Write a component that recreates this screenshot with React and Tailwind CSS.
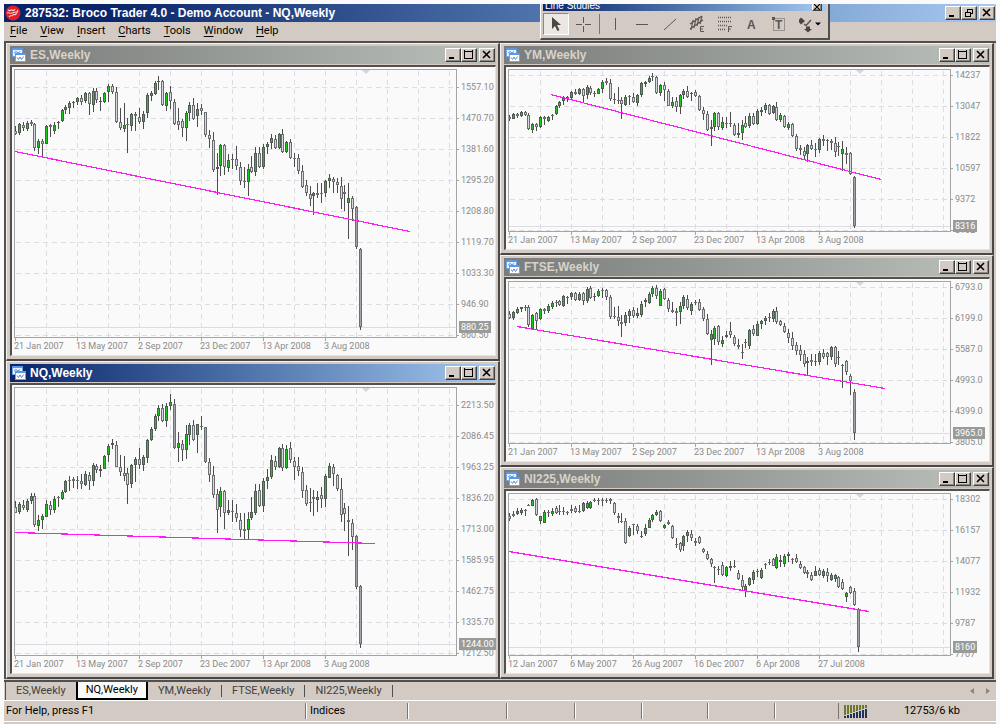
import React from "react";

// Candle series: "high top bottom low" in thirds of a pixel, "g" marks a rising week.
const ES = `168 182 192 195|158 163 190 195g|157 165 174 182|154 158 176 184g|151 157 163 167|158 163 235 242|206 213 233 253g|207 213 221 258|165 169 221 223g|163 166 171 200|156 165 184 192g|153 155 160 176g|118 121 153 155g|106 111 121 131g|94 99 113 131g|92 96 100 115g|82 85 97 105g|75 84 96 104|66 69 93 98g|66 69 103 134|55 62 104 127g|55 64 91 98|81 94 96 123g|66 68 96 98g|43 49 66 97g|43 47 66 72|52 67 156 160|115 157 175 181|100 165 178 187g|143 163 166 248|129 131 169 184g|127 132 139 184|113 140 157 162|122 131 156 178g|68 75 130 143g|64 70 78 94g|34 38 71 76g|19 32 37 60g|30 32 106 109|65 68 107 122g|49 67 94 118|86 96 162 166|115 154 164 180|148 154 174 200|123 128 174 212g|97 104 128 154g|84 105 148 150|100 116 137 170g|101 115 124 134|125 127 195 200|181 195 207 235|186 209 299 306|250 290 298 375g|222 224 288 318g|222 224 292 314|252 270 293 305g|252 267 269 296|229 268 287 299|277 292 334 346|290 332 336 355|282 298 336 378g|258 290 305 310|232 250 305 317g|232 250 290 295|222 232 291 298g|217 222 232 252g|192 203 220 238g|194 206 233 238|188 193 233 236g|176 192 246 249|212 217 247 250g|208 217 264 266|250 264 266 292|252 265 304 311|286 304 350 355|330 346 370 378|348 372 388 408|366 370 377 434g|338 370 374 384|338 370 372 398|330 334 368 382g|311 325 334 355g|320 326 336 370|323 336 346 368|322 347 388 416|345 366 373 422|338 383 400 508g|378 385 418 452|408 411 532 538|534 536 772 780`;
const NQ = `422 440 458 460|427 433 455 461g|420 436 444 450|416 424 449 455g|398 408 422 432g|399 408 496 502|466 480 497 513g|461 469 481 506g|419 431 470 472g|424 434 449 464|409 418 449 459g|409 411 414 440|390 396 416 420g|360 362 397 400g|348 361 363 392|350 358 362 384|347 359 363 388|343 364 373 388|334 343 374 377g|336 344 362 389|310 314 362 377g|312 319 331 338|314 326 332 352g|285 287 326 328g|253 257 286 307g|236 250 256 268g|243 255 320 322|285 320 337 349|288 340 347 363|324 340 376 432|313 315 371 383g|290 298 315 365g|264 298 314 328|285 291 315 332g|236 241 293 308g|201 207 241 243g|163 168 207 214g|134 143 167 184g|132 145 184 186|128 138 184 200g|102 127 137 150g|117 131 263 266|216 250 263 307g|240 252 270 303|196 222 269 298g|188 196 226 255g|181 195 240 242|192 193 226 278g|169 197 202 210|200 202 305 308|293 305 346 365|318 345 406 414|387 401 449 519|380 394 442 472g|391 393 458 506|419 450 460 466g|421 453 455 485|431 460 475 487|459 480 510 531|460 508 512 538|455 478 510 540g|410 457 473 480g|373 392 458 466g|373 390 438 442|354 364 437 455g|328 350 364 388g|286 300 350 356g|288 302 320 331|262 265 321 323g|252 265 324 333|256 267 324 328g|247 265 300 310|290 302 320 360|292 318 334 348|322 335 394 414|374 391 431 437|385 426 428 455|390 412 418 467|392 410 420 455g|380 404 416 443|343 349 417 440g|309 317 353 354g|311 320 343 378|342 344 387 392|354 388 466 487|430 445 461 514|438 480 486 587|478 490 532 570|524 528 680 686|676 678 852 864`;
const YM = `164 172 177 182|160 163 176 178g|159 162 167 173|153 155 167 171g|152 155 164 168|160 166 208 210|188 193 210 219g|188 193 202 214|169 171 200 203g|169 172 176 196|167 171 182 186g|162 164 167 179|135 138 163 165g|123 126 138 145g|109 113 123 136g|107 112 116 126g|92 95 115 118g|87 95 103 106|84 88 102 106g|84 88 108 125|75 82 106 118g|78 84 100 105|92 100 102 112|84 86 101 103g|60 65 87 98g|55 64 68 74|58 68 118 122|98 118 121 131|82 121 124 131|112 120 132 177|105 110 134 138g|105 109 112 136|99 112 126 130|103 106 129 138g|66 70 106 112g|62 66 72 82g|47 53 65 68g|40 48 51 64|47 50 99 101|73 75 100 109g|66 74 91 122|86 92 137 139|112 126 137 143g|110 124 140 155|102 105 141 162g|88 92 105 116g|79 92 110 114|95 98 102 123g|91 96 108 111|106 108 149 152|140 150 163 180|152 163 209 214|180 200 208 258g|157 158 200 213g|157 160 202 210|172 187 203 211g|172 188 190 204|157 188 192 200|188 194 226 229|190 220 226 235g|181 194 220 240g|169 189 200 204|158 169 198 204g|160 169 192 195|148 152 193 196g|142 149 156 168g|129 135 150 158g|132 136 162 164|136 138 160 163g|127 140 181 184|160 166 180 186g|166 169 202 204|187 192 204 210g|190 193 229 231|222 227 266 272|256 265 271 284|260 274 288 299|252 254 281 307g|240 254 268 270|250 267 269 290|234 238 270 280g|226 238 242 258|238 240 244 272|236 244 250 270|232 249 277 290|246 257 260 288|244 266 283 332g|260 280 284 313|276 279 341 344|349 350 497 504`;
const FTSE = `182 193 205 208|182 186 204 209g|172 177 189 192g|170 172 178 187g|164 170 175 184|165 171 224 232|193 196 236 239g|186 190 212 240|174 177 207 210g|174 178 182 193|163 168 184 188g|153 159 170 176g|150 157 159 172|149 154 166 168|136 139 168 171g|138 140 143 163|126 130 141 151g|127 130 149 152|126 131 149 153g|126 130 154 164|111 116 152 158g|109 113 145 147|130 138 142 153g|118 123 138 140g|113 119 121 145|116 120 142 150|134 140 200 206|172 198 201 206|168 202 212 228|195 215 221 260|187 196 218 228g|176 182 197 220g|170 180 198 204|175 190 198 204g|154 162 196 200g|145 150 157 170g|127 131 160 163g|108 115 132 140g|105 115 137 146|118 122 167 168g|113 118 148 151|145 150 178 186|156 179 186 190|175 182 190 228|156 168 187 222g|135 142 169 178g|136 147 174 180|156 161 184 196g|150 156 160 164|146 156 180 182|172 178 208 213|192 206 251 256|240 253 270 345g|229 233 268 285g|225 229 275 286|258 270 282 290g|244 256 262 265g|216 243 254 263|256 260 283 288|266 286 292 296|283 305 310 326|268 276 280 294|238 240 287 297g|226 236 252 257|214 221 257 259g|210 214 222 236g|198 204 213 224g|188 200 204 216|178 183 208 216g|171 183 217 222|210 214 226 229|220 228 246 248|238 248 263 280|246 263 289 300|277 284 303 315|285 301 314 334|301 312 342 350|321 332 338 375g|311 331 336 349|313 332 336 349|304 308 336 345g|298 310 320 328|306 310 320 344|288 291 320 330g|288 291 343 351|304 320 324 344|342 344 346 413|331 332 367 376|372 377 392 434|418 427 549 570`;
const NI = `144 152 163 168|139 147 152 157|130 137 148 150g|130 134 143 150g|133 136 139 152|118 120 122 124|102 105 122 124g|98 102 150 153|152 154 167 178g|135 140 173 175g|134 140 144 157|129 138 146 154g|124 130 143 146|121 138 142 150|127 139 141 149|138 140 142 150|121 132 139 145|123 128 142 145|121 137 142 144|110 114 139 142g|108 115 128 132g|109 112 130 133g|100 105 107 112|100 105 107 120|98 105 107 122|99 105 107 114|98 103 108 118|112 115 145 150|145 152 158 174|144 168 172 175|158 168 234 236|184 190 212 216g|176 178 181 209|176 182 198 208|198 212 215 219|178 190 206 212g|158 164 188 190g|147 150 164 172g|135 142 150 152g|135 138 167 172|176 180 188 193g|164 172 176 180|181 182 220 222|220 236 239 248|230 234 256 262|210 214 244 258g|195 202 214 230g|196 207 219 228|220 228 234 244|213 217 235 237|249 252 262 264|258 266 282 286|280 283 298 305|303 305 308 355|302 312 314 330|291 300 330 333|303 306 334 337g|288 302 310 318g|284 304 307 310|315 325 341 346|330 346 367 374|358 362 376 395g|336 339 360 362g|316 320 346 357g|311 318 322 337|310 314 338 342g|294 297 300 312|282 290 294 300|278 282 302 304|268 276 308 312g|269 284 290 305g|268 274 298 305g|262 267 272 290g|278 282 286 296|266 280 291 293|288 297 310 313|302 305 325 326|314 321 326 338|320 330 344 348|304 317 332 334g|309 315 329 334|311 319 334 338g|309 320 334 350|325 331 346 349g|327 330 341 350g|333 336 367 370|343 352 372 376|381 385 396 410g|364 366 383 386|370 377 421 424|429 431 546 560`;

const DATES = ["21 Jan 2007", "13 May 2007", "2 Sep 2007", "23 Dec 2007", "13 Apr 2008", "3 Aug 2008"];

const CHARTS = {
  ES: {
    title: "ES,Weekly", data: ES, base: 0, tall: true, line: [0, 81, 395, 161], last: 257, tag: "880.25", dates: DATES,
    prices: ["1557.10", "1470.70", "1381.60", "1295.20", "1208.80", "1119.70", "1033.30", "946.90", "860.50"],
  },
  NQ: {
    title: "NQ,Weekly", data: NQ, base: 28, tall: true, active: true, line: [0, 144, 360, 155], last: 256, tag: "1244.00", dates: DATES,
    prices: ["2213.50", "2086.45", "1963.25", "1836.20", "1713.00", "1585.95", "1462.75", "1335.70", "1212.50"],
  },
  YM: {
    title: "YM,Weekly", data: YM, base: 10, line: [42, 24, 372, 109], last: 156, tag: "8316", dates: DATES,
    prices: ["14237", "13047", "11822", "10597", "9372", "8102"],
  },
  FTSE: {
    title: "FTSE,Weekly", data: FTSE, base: 32, line: [8, 44, 376, 106], last: 151, tag: "3965.0", dates: DATES,
    prices: ["6793.0", "6199.0", "5587.0", "4993.0", "4399.0", "3805.0"],
  },
  NI: {
    title: "NI225,Weekly", data: NI, base: 29, line: [0, 57, 360, 117], last: 153, tag: "8160",
    dates: ["12 Jan 2007", "6 May 2007", "26 Aug 2007", "16 Dec 2007", "6 Apr 2008", "27 Jul 2008"],
    prices: ["18302", "16157", "14077", "11932", "9787", "7707"],
  },
};

const WEEK = 3.875;
const CELL = 31;

function Candles({ data, base }) {
  return data.split("|").map((row, i) => {
    const up = row.endsWith("g");
    const [h, t, b, l] = row.replace("g", "").split(" ").map((v) => Math.round(v / 3) - base);
    const x = Math.round(i * WEEK);
    const bodyH = Math.max(1, b - t);
    const fill = up ? "#1fc41f" : bodyH > 34 ? "#a2a4aa" : "#d6d9e0";
    return (
      <g key={i}>
        <rect x={x} y={h} width="1" height={Math.max(1, l - h)} fill="#4c4c4c" />
        <rect x={x - 1} y={t} width="3" height={bodyH} fill={up ? "#4e5e4e" : "#6c6e72"} />
        {bodyH > 2 && <rect x={x} y={t + 1} width="1" height={bodyH - 2} fill={fill} />}
      </g>
    );
  });
}

function Plot({ chart }) {
  const first = chart.tall ? 17 : 5;
  const [x1, y1, x2, y2] = chart.line;
  const ids = Array.from({ length: 40 }, (_, i) => i);
  return (
    <svg className="block h-full w-full" role="img" aria-label={chart.title + " chart"}>
      <g stroke="#dcdce2" strokeWidth="1" shapeRendering="crispEdges">
        {ids.map((i) => (
          <line key={"v" + i} x1={CELL * (i + 1) + 0.5} x2={CELL * (i + 1) + 0.5} y1="1" y2="100%" strokeDasharray="5 4" />
        ))}
        {ids.map((i) => (
          <line key={"h" + i} x1="1" x2="100%" y1={first + CELL * i + 0.5} y2={first + CELL * i + 0.5} strokeDasharray="5 4" />
        ))}
        <line x1="0" x2="100%" y1={chart.last + 0.5} y2={chart.last + 0.5} />
      </g>
      <path d="M347 0h8l-4 4z" fill="#d6d6da" />
      <g shapeRendering="crispEdges">
        <Candles data={chart.data} base={chart.base} />
        <line x1={x1} y1={y1 + 0.5} x2={x2} y2={y2 + 0.5} stroke="#ff1cf4" strokeWidth="1.200" />
      </g>
    </svg>
  );
}

const raised =
  "bg-[#d3cbc3] border border-t-white border-l-white border-r-[#404040] border-b-[#404040] shadow-[inset_-1px_-1px_0_#8c8680]";

function WinButton({ label, children, className = "" }) {
  return (
    <button type="button" aria-label={label} className={`flex h-[14px] w-4 items-center justify-center ${raised} ${className}`}>
      <svg width="10" height="10" viewBox="0 0 10 10" fill="none" stroke="#000" shapeRendering="crispEdges">
        {children}
      </svg>
    </button>
  );
}

function WinButtons({ restore }) {
  return (
    <div className="flex shrink-0">
      <WinButton label="Minimize">
        <path d="M1 8h5" strokeWidth="2" />
      </WinButton>
      <WinButton label={restore ? "Restore" : "Maximize"}>
        {restore ? (
          <path d="M3 1h6M3.500 1v3M8.500 1v5M6 5.500h3M1 4h6M1.500 4v5M6.500 4v5M1 8.500h6" />
        ) : (
          <path d="M0 1h9M.5 0v9M8.500 0v9M0 8.500h9" />
        )}
      </WinButton>
      <WinButton label="Close" className="ml-[2px]">
        <path d="M1 1l7 7M8 1l-7 7" strokeWidth="1.600" shapeRendering="auto" />
      </WinButton>
    </div>
  );
}

function ChartIcon() {
  return (
    <svg width="14" height="14" viewBox="0 0 14 14" className="shrink-0" aria-hidden="true">
      <rect x="0.500" y="0.500" width="10" height="8" fill="#e8f1fd" stroke="#6ea4e8" />
      <path d="M0 1h11" stroke="#5b97e4" strokeWidth="2" />
      <path d="M2 5l2-1.500 2 1.500 2-1.500" stroke="#5b93dc" fill="none" />
      <rect x="3.500" y="5.500" width="10" height="8" fill="#fff" stroke="#6ea4e8" />
      <path d="M3 6h11" stroke="#5b97e4" strokeWidth="2" />
      <path d="M5 9.500l1.500 2 1.500-2.500 1.500 2.500 2-3" stroke="#4f8ad8" fill="none" />
    </svg>
  );
}

function ChartWindow({ chart }) {
  const bar = chart.active
    ? "bg-gradient-to-r from-[#0a246a] to-[#a6caf0] text-white"
    : "bg-gradient-to-r from-[#7a7d7b] to-[#bbc0bb] text-[#d8d2ca]";
  const plotHeight = chart.tall ? "h-[269px]" : "h-[163px]";
  return (
    <section className="flex flex-1 flex-col border-t border-r-2 border-b-2 border-l border-t-[#f4f2ee] border-r-[#484848] border-b-[#484848] border-l-[#f4f2ee] bg-[#d3cbc3] pt-[2px] pr-[2px] pb-[3px] pl-[3px]">
      <header className={`flex h-[18px] items-center gap-1 pr-px pl-[2px] ${bar}`}>
        <ChartIcon />
        <h2 className="flex-1 font-['Liberation_Sans',sans-serif] text-[12px] leading-[18px] font-bold whitespace-nowrap">{chart.title}</h2>
        <WinButtons />
      </header>
      <div className="mt-px flex flex-1 flex-col border-t-2 border-r border-b border-l-2 border-t-[#505050] border-r-[#e8e4de] border-b-[#e8e4de] border-l-[#505050] bg-[#fafafa] pt-[2px] pl-[2px] text-[9px] leading-[10px] text-[#8a8a8a]">
        <div className="flex">
          <div className={`min-w-0 flex-1 border border-[#a4a4a4] ${plotHeight}`}>
            <Plot chart={chart} />
          </div>
          <div className={`relative w-[38px] shrink-0 ${plotHeight}`}>
            <ul className={`flex flex-col gap-[21px] ${chart.tall ? "pt-[13px]" : "pt-px"}`}>
              {chart.prices.map((p) => (
                <li key={p} className="flex h-[10px] items-center gap-[2px]">
                  <span className="h-px w-[2px] bg-[#a4a4a4]" />
                  {p}
                </li>
              ))}
            </ul>
            <span className="absolute left-[2px] bg-[#999b99] px-[2px] py-px text-white" style={{ top: chart.last - 5 }}>
              {chart.tag}
            </span>
          </div>
        </div>
        <ul className="flex h-[17px]">
          {chart.dates.map((d) => (
            <li key={d} className="w-[62px] whitespace-nowrap">
              <span className="ml-px block h-[3px] w-px bg-[#a4a4a4]" />
              {d}
            </li>
          ))}
        </ul>
      </div>
    </section>
  );
}

function Tool({ label, pressed, wide, children }) {
  return (
    <button
      type="button"
      aria-label={label}
      className={`flex h-[22px] items-center justify-center ${wide ? "w-[30px]" : "w-[26px]"} ${
        pressed ? "border border-t-[#8c8680] border-r-white border-b-white border-l-[#8c8680] bg-[#ebe7e2]" : ""
      }`}
    >
      <svg width={wide ? 24 : 18} height="18" viewBox={wide ? "0 0 24 18" : "0 0 18 18"} fill="none" stroke="#5a5652">
        {children}
      </svg>
    </button>
  );
}

function LineStudies() {
  return (
    <aside
      aria-label="Line Studies"
      className="absolute top-0 right-[166px] w-[290px] border-r-2 border-b-2 border-l border-r-[#505050] border-b-[#505050] border-l-white bg-[#d3cbc3] px-[2px] pb-[3px]"
    >
      <div className="flex h-[7px] items-end justify-between overflow-hidden bg-gradient-to-r from-[#0a246a] to-[#a6caf0] px-[2px] text-white">
        <span className="font-['Liberation_Sans',sans-serif] text-[10px] leading-[10px]">Line Studies</span>
        <button type="button" aria-label="Close" className={`mr-[2px] flex h-[10px] w-[10px] shrink-0 items-end justify-center ${raised}`}>
          <svg width="6" height="6" viewBox="0 0 6 6" stroke="#000" strokeWidth="1.200">
            <path d="M0 0l6 6M6 0l-6 6" />
          </svg>
        </button>
      </div>
      <div className="mt-[2px] flex items-center gap-[2px]">
        <Tool label="Cursor" pressed>
          <path d="M5 2v12l3-3 2.500 5 2-1-2.500-5h4z" fill="#4a4642" stroke="none" />
        </Tool>
        <Tool label="Crosshair">
          <path d="M8.500 2v6M8.500 11v6M1 9.500h6M10 9.500h6" />
        </Tool>
        <span className="h-5 w-px bg-[#7c7670]" />
        <Tool label="Vertical line">
          <path d="M9.500 3v12" />
        </Tool>
        <Tool label="Horizontal line">
          <path d="M3 9.500h12" />
        </Tool>
        <Tool label="Trendline">
          <path d="M3 15L15 4" />
        </Tool>
        <Tool label="Equidistant channel">
          <path d="M1 9L13 1M1 14L14 5M4 5l-2 10M7 3l-2 10M10 2L8 11M13 1l-2 8" strokeWidth="1.200" />
          <path d="M15 11.500h-3.500v5H15M11.500 14H14" />
        </Tool>
        <Tool label="Fibonacci retracement">
          <path d="M1 2.500h13M1 6.500h13M1 10.500h9M1 14.500h8" strokeDasharray="1 1" strokeWidth="1.400" />
          <path d="M15 11.500h-3.500V17M11.500 14H14" />
        </Tool>
        <Tool label="Text">
          <text x="3" y="14" fontSize="12" fontWeight="bold" fill="#5a5652" stroke="none" className="font-['Liberation_Sans',sans-serif]">A</text>
        </Tool>
        <Tool label="Text label">
          <rect x="1.500" y="3.500" width="11" height="12" strokeDasharray="1 1" />
          <path d="M0 2h3v3H0z" fill="#5a5652" stroke="none" />
          <text x="3" y="14" fontSize="12" fontWeight="bold" fill="#5a5652" stroke="none" className="font-['Liberation_Sans',sans-serif]">T</text>
        </Tool>
        <Tool label="Arrows" wide>
          <path d="M-1 6l3-3.500L6 6l-4 3.500zM5 14h8l-4 3.500zM7 11.500h4V14H7z" fill="#4a4642" stroke="none" />
          <path d="M5 9l2 1.500L12 5" strokeWidth="1.500" />
          <path d="M16 7.500h6l-3 3z" fill="#000" stroke="none" />
        </Tool>
      </div>
    </aside>
  );
}

function Logo() {
  return (
    <svg width="16" height="16" viewBox="0 0 16 16" className="shrink-0" aria-hidden="true">
      <circle cx="8" cy="8" r="7.500" fill="#dc1f2a" />
      <path d="M3 5c2 2 3-1 4 0s2 1 3-1M2 8c2-1 3 1 5 0s3-1 6-1M4 12c2-3 3 0 4-2s2 1 3-1l2-4" fill="none" stroke="#fbd0d0" strokeWidth="1.100" />
    </svg>
  );
}

const MENU = ["File", "View", "Insert", "Charts", "Tools", "Window", "Help"];
const CELLS = ["w-[102px]", "w-[99px]", "w-[68px]", "w-[67px]", "w-[66px]", "w-[67px]", "w-[64px]"];

export default function App() {
  return (
    <div className="min-h-screen bg-[#fafafa] px-1 pt-1 font-['Roboto',sans-serif] text-[11px] text-black">
      <div className="relative flex min-h-[calc(100vh-4px)] flex-col bg-[#d3cbc3]">
        <header className="flex h-[18px] items-center gap-1 bg-gradient-to-r from-[#0a246a] from-10% to-[#a6caf0] pr-px pl-px text-white">
          <Logo />
          <h1 className="flex-1 font-['Liberation_Sans',sans-serif] text-[12px] leading-[18px] font-bold whitespace-nowrap">
            287532: Broco Trader 4.0 - Demo Account - NQ,Weekly
          </h1>
          <WinButtons restore />
        </header>
        <nav className="flex h-[19px] items-center gap-[13px] pl-[6px]">
          {MENU.map((m) => (
            <button type="button" key={m}>
              <u className="underline-offset-2">{m[0]}</u>
              {m.slice(1)}
            </button>
          ))}
        </nav>
        <LineStudies />

        <main className="grid flex-1 grid-cols-2 border-t-2 border-l-2 border-[#505050] pr-[2px]">
          <div className="flex min-w-0 flex-col">
            <ChartWindow chart={CHARTS.ES} />
            <ChartWindow chart={CHARTS.NQ} />
          </div>
          <div className="flex min-w-0 flex-col">
            <ChartWindow chart={CHARTS.YM} />
            <ChartWindow chart={CHARTS.FTSE} />
            <ChartWindow chart={CHARTS.NI} />
          </div>
        </main>

        <nav className="mt-px flex h-5 items-stretch border-t-2 border-[#505050] pl-px text-[#404040]">
          {["ES", "NQ", "YM", "FTSE", "NI"].map((k) => {
            const active = k === "NQ";
            const look = active
              ? "border-r-2 border-b-2 border-l-2 border-black bg-[#fafafa] px-[8px] text-black"
              : k === "ES"
                ? "border-l border-[#505050] px-[10px]"
                : "px-[10px]";
            return (
              <div key={k} className="flex items-stretch">
                <button type="button" className={look}>
                  {CHARTS[k].title}
                </button>
                {k !== "ES" && !active && <span className="h-3 w-px self-center bg-[#505050]" />}
              </div>
            );
          })}
          <div className="ml-auto flex items-center gap-3 pr-[6px]">
            <button type="button" aria-label="Scroll tabs left">
              <svg width="4" height="6" viewBox="0 0 4 6"><path d="M4 0v6L0 3z" fill="#8c8680" /></svg>
            </button>
            <button type="button" aria-label="Scroll tabs right">
              <svg width="4" height="6" viewBox="0 0 4 6"><path d="M0 0v6l4-3z" fill="#8c8680" /></svg>
            </button>
          </div>
        </nav>

        <footer className="flex h-[22px] items-center border-t border-b border-white">
          <span className="w-[301px] pl-[2px]">For Help, press F1</span>
          {CELLS.map((w, i) => (
            <span key={i} className={`flex h-4 items-center border-l border-[#7c7670] pl-1 shadow-[inset_1px_0_0_#fff] ${w}`}>
              {i === 0 ? "Indices" : ""}
            </span>
          ))}
          <span className="flex h-4 flex-1 items-center justify-between border-l border-[#7c7670] pr-9 pl-[5px]">
            <svg width="24" height="13" viewBox="0 0 24 13" shapeRendering="crispEdges" aria-hidden="true">
              {[0, 1, 2, 3, 4, 5, 6, 7].map((i) => (
                <g key={i}>
                  <rect x={i * 3} y="0" width="2" height={10 - i} fill="#6b7a2c" />
                  <rect x={i * 3} y={11 - i} width="2" height={2 + i} fill="#1c3560" />
                </g>
              ))}
            </svg>
            12753/6 kb
          </span>
        </footer>
        <div className="h-[2px]" />
      </div>
    </div>
  );
}
